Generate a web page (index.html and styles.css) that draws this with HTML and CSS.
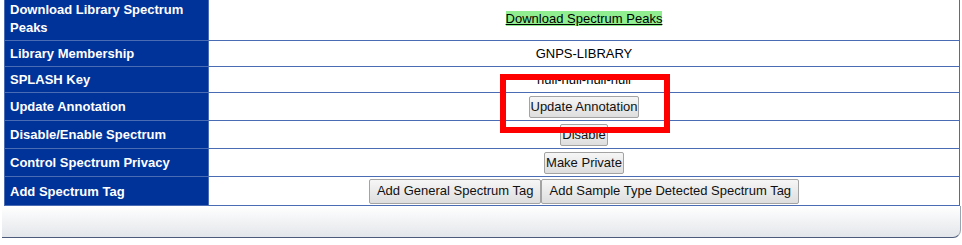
FILE: index.html
```html
<!DOCTYPE html>
<html>
<head>
<meta charset="utf-8">
<link rel="stylesheet" href="styles.css">
</head>
<body>
<div class="wrap">
  <table class="info">
    <tr class="row-text">
      <th>Download Library Spectrum Peaks</th>
      <td><a class="dl-link" href="#">Download Spectrum Peaks</a></td>
    </tr>
    <tr class="row-text">
      <th>Library Membership</th>
      <td>GNPS-LIBRARY</td>
    </tr>
    <tr class="row-text">
      <th>SPLASH Key</th>
      <td>null-null-null-null</td>
    </tr>
    <tr class="row-btn">
      <th>Update Annotation</th>
      <td><button class="btn">Update Annotation</button></td>
    </tr>
    <tr class="row-btn">
      <th>Disable/Enable Spectrum</th>
      <td><button class="btn">Disable</button></td>
    </tr>
    <tr class="row-btn">
      <th>Control Spectrum Privacy</th>
      <td><button class="btn">Make Private</button></td>
    </tr>
    <tr class="row-tag">
      <th>Add Spectrum Tag</th>
      <td><button class="btn btn-tag">Add General Spectrum Tag</button><button class="btn btn-tag">Add Sample Type Detected Spectrum Tag</button></td>
    </tr>
  </table>
  <div class="footer-bar"></div>
  <div class="highlight"></div>
</div>
</body>
</html>
```

FILE: styles.css
```css
html, body {
  margin: 0;
  padding: 0;
  background: #ffffff;
}

body {
  font-family: "Liberation Sans", Arial, sans-serif;
  font-size: 13px;
  color: #000;
}

.wrap {
  position: relative;
  padding: 0 1px 0 2px;
}

.info {
  margin: -4px 0 0 2px;
  width: 956px;
  border-collapse: collapse;
}

.info th,
.info td {
  border: 1px solid #4a6cb4;
  line-height: 18px;
}

.info th {
  width: 193px;
  background: #003399;
  color: #ffffff;
  font-weight: bold;
  text-align: left;
  padding-left: 5px;
  padding-right: 5px;
  vertical-align: middle;
}

.info td {
  text-align: center;
  vertical-align: middle;
  padding-left: 5px;
  padding-right: 5px;
}

.row-text th,
.row-text td {
  padding-top: 4px;
  padding-bottom: 3px;
}

.row-btn th,
.row-btn td {
  padding-top: 3px;
  padding-bottom: 2px;
}

.row-tag th,
.row-tag td {
  padding-top: 2px;
  padding-bottom: 1px;
}

.dl-link {
  color: #000;
  background: #90ee90;
  text-decoration: underline;
}

.btn {
  font-family: "Liberation Sans", Arial, sans-serif;
  font-size: 13px;
  line-height: 16px;
  color: #111;
  padding: 2px 1px;
  margin: 0;
  border: 1px solid #a3a3a3;
  border-radius: 2px;
  background: linear-gradient(#f6f6f6, #dedede);
  vertical-align: middle;
}

.btn-tag {
  padding: 3px 7px 4px;
  line-height: 16px;
}

.footer-bar {
  height: 31px;
  border-bottom: 1px solid #4d5b7a;
  border-right: 1px solid #9aa3b0;
  border-bottom-right-radius: 8px;
  background: linear-gradient(#ffffff, #e3e6ea);
}

.highlight {
  position: absolute;
  left: 500px;
  top: 78px;
  width: 170px;
  height: 59px;
  box-sizing: border-box;
  border: 6px solid #ff0000;
}
```
